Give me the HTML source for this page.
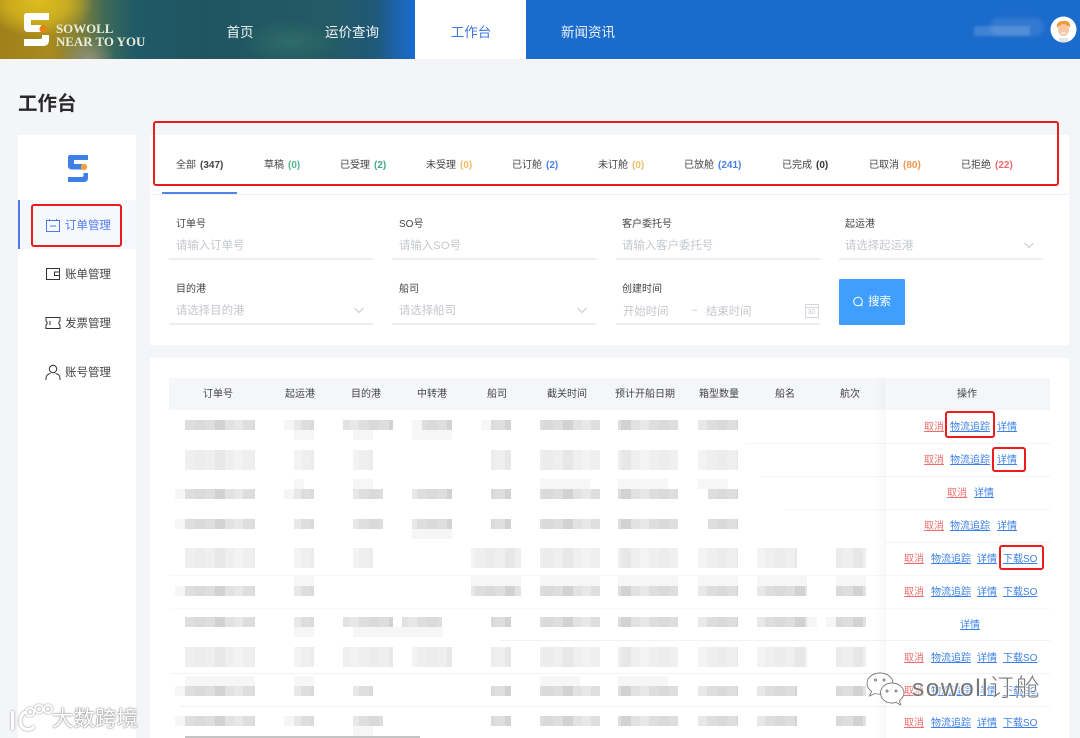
<!DOCTYPE html>
<html lang="zh"><head><meta charset="utf-8"><title>工作台</title>
<style>
html,body{margin:0;padding:0}
body{width:1080px;height:738px;overflow:hidden;position:relative;background:#f3f5f9;font-family:"Liberation Sans","Noto Sans CJK SC",sans-serif;color:#333}
.a,.a *{box-sizing:border-box}
.a{position:absolute;white-space:nowrap;line-height:1}
.hdr{left:0;top:0;width:1080px;height:59px;overflow:hidden;background:
radial-gradient(ellipse 55px 35px at 38px 2px,#dcbc1e 0,rgba(220,188,30,.7) 55%,rgba(220,188,30,0) 100%),
radial-gradient(ellipse 28px 22px at 88px 58px,#8f9078 0,rgba(143,144,120,0) 100%),
radial-gradient(ellipse 50px 22px at 290px 42px,#2e6c68 0,rgba(46,108,104,0) 100%),
linear-gradient(90deg,#a08019 0,#a88a1e 50px,#80803a 80px,#3f6a58 105px,#1f5a68 135px,#1f5560 200px,#245a64 330px,#1f5878 375px,#1b6bcc 412px,#1b6bcc 1080px)}
.nav{top:26px;font-size:13.5px;color:#eef3f8;width:80px;text-align:center;margin-left:-40px}
.tab{top:161px;font-size:10px;color:#444}
.tab b{font-weight:700;margin-left:4px}
.lb{font-size:10px;color:#444}
.ph{font-size:11.4px;color:#c4c7cc}
.ul{height:1.5px;background:#eceef1;width:204px}
.sd{left:65px;font-size:11.5px;color:#444}
.th{top:390px;font-size:10px;color:#444;width:70px;text-align:center;margin-left:-35px}
.c,.d{font-size:10px;text-decoration:underline;position:absolute;line-height:1}
.c{color:#ee6f6f}.d{color:#3c80e8}
.rb{border:2px solid #ea1c1c;border-radius:3px}
.ln{height:1px;background:#f0f2f5}
</style></head><body>

<div class="a hdr"></div>
<svg class="a" style="left:22px;top:11px" width="30" height="37" viewBox="0 0 30 37">
<path d="M5 2H27V9H9V14H19V21H6C3.500 21 2 19.500 2 17V5C2 3 3 2 5 2Z M2 28H18C19.500 28 20 27.500 20 26V24H27V29C27 33 25 35 21 35H2Z" fill="#fff"/>
<circle cx="21" cy="18" r="3.600" fill="#ea7f12"/></svg>
<div class="a" style="left:56px;top:22px;font:700 12.9px 'Liberation Serif',serif;color:#e9ecd8">SOWOLL</div>
<div class="a" style="left:56px;top:35px;font:700 12.9px 'Liberation Serif',serif;color:#e9ecd8">NEAR TO YOU</div>
<div class="a nav" style="left:240px">首页</div>
<div class="a nav" style="left:352px">运价查询</div>
<div class="a" style="left:415px;top:0;width:111px;height:59px;background:#fff"></div>
<div class="a nav" style="left:471px;color:#3f78e0">工作台</div>
<div class="a nav" style="left:588px">新闻资讯</div>
<div class="a" style="left:974px;top:26px;width:56px;height:10px;background:rgba(255,255,255,.16);filter:blur(1px)"></div>
<div class="a" style="left:990px;top:18px;width:54px;height:18px;border-radius:10px;background:rgba(255,255,255,.1);filter:blur(2px)"></div>
<svg class="a" style="left:1050px;top:16px" width="27" height="27" viewBox="0 0 27 27">
<circle cx="13.500" cy="13.500" r="13" fill="#fff"/>
<path d="M7 12C6 7 9 5 13 5C18 4 21 7 20 12L18.500 10H9Z" fill="#f09a3a"/>
<ellipse cx="13.500" cy="14" rx="5.500" ry="6" fill="#f7c7a4"/>
<path d="M10.500 16.500Q13.500 19.500 16.500 16.500Z" fill="#fff"/>
<path d="M9 26V22H18V26Z" fill="#e9e4e4"/></svg>

<div class="a" style="left:18px;top:95px;font-size:19.500px;font-weight:700;color:#2a2a2a">工作台</div>

<div class="a" style="left:18px;top:135px;width:118px;height:603px;background:#fff"></div>
<svg class="a" style="left:67px;top:154px" width="22" height="29" viewBox="0 0 22 29">
<path d="M3 1H21V6H7V10H15V15.500H5C2.500 15.500 1 14 1 12V3C1 2 2 1 3 1Z M1 23H15C16 23 16.500 22.500 16.500 21V19H21V24C21 26.500 19.500 28 17 28H1Z" fill="#3f7fe8"/>
<circle cx="17" cy="13" r="3.200" fill="#f5a23c"/></svg>
<div class="a" style="left:18px;top:200px;width:118px;height:49px;background:#f5f8ff;border-left:2px solid #4f7ae8"></div>
<svg class="a" style="left:45px;top:218px" width="16" height="15" viewBox="0 0 16 15" fill="none" stroke="#4f7ae8" stroke-width="1">
<path d="M1.500 2.500H14.500V13.500H1.500Z M4.500 1V3 M11.500 1V3 M5 8H11"/></svg>
<svg class="a" style="left:45px;top:267px" width="16" height="14" viewBox="0 0 16 14" fill="none" stroke="#333" stroke-width="1">
<path d="M1.500 1.500H14.500V12.500H1.500Z M14 5H9.500V8.500H14"/></svg>
<svg class="a" style="left:45px;top:316px" width="16" height="14" viewBox="0 0 16 14" fill="none" stroke="#333" stroke-width="1">
<path d="M1 1.500H15V5C13.500 5.500 13.500 8.500 15 9V12.500H1V9C2.500 8.500 2.500 5.500 1 5Z M5 5V9"/></svg>
<svg class="a" style="left:45px;top:364px" width="16" height="17" viewBox="0 0 16 17" fill="none" stroke="#333" stroke-width="1">
<circle cx="8" cy="5" r="3.700"/><path d="M1 16V14C1 11.500 3 10 5.500 9.500M15 16V14C15 11.500 13 10 10.500 9.500"/></svg>
<div class="a sd" style="top:221px;color:#4f7ae8">订单管理</div>
<div class="a sd" style="top:270px">账单管理</div>
<div class="a sd" style="top:319px">发票管理</div>
<div class="a sd" style="top:368px">账号管理</div>

<div class="a" style="left:150px;top:135px;width:919px;height:210px;background:#fff"></div>
<div class="a" style="left:150px;top:194px;width:919px;height:1px;background:#eff1f4"></div>
<div class="a" style="left:162px;top:192px;width:75px;height:2px;background:#4f86e8"></div>
<div class="a tab" style="left:176px">全部<b style="color:#444">(347)</b></div>
<div class="a tab" style="left:264px">草稿<b style="color:#4fb58c">(0)</b></div>
<div class="a tab" style="left:340px">已受理<b style="color:#3fae84">(2)</b></div>
<div class="a tab" style="left:426px">未受理<b style="color:#eebd62">(0)</b></div>
<div class="a tab" style="left:512px">已订舱<b style="color:#4a7fe6">(2)</b></div>
<div class="a tab" style="left:598px">未订舱<b style="color:#eebd62">(0)</b></div>
<div class="a tab" style="left:684px">已放舱<b style="color:#4a7fe6">(241)</b></div>
<div class="a tab" style="left:782px">已完成<b style="color:#333">(0)</b></div>
<div class="a tab" style="left:869px">已取消<b style="color:#ee9650">(80)</b></div>
<div class="a tab" style="left:961px">已拒绝<b style="color:#ee6a72">(22)</b></div>

<div class="a lb" style="left:176px;top:220px">订单号</div>
<div class="a lb" style="left:399px;top:220px">SO号</div>
<div class="a lb" style="left:622px;top:220px">客户委托号</div>
<div class="a lb" style="left:845px;top:220px">起运港</div>
<div class="a ph" style="left:176px;top:241px">请输入订单号</div>
<div class="a ph" style="left:399px;top:241px">请输入SO号</div>
<div class="a ph" style="left:622px;top:241px">请输入客户委托号</div>
<div class="a ph" style="left:845px;top:241px">请选择起运港</div>
<div class="a ul" style="left:169px;top:258px"></div>
<div class="a ul" style="left:392px;top:258px"></div>
<div class="a ul" style="left:616px;top:258px"></div>
<div class="a ul" style="left:839px;top:258px"></div>
<div class="a lb" style="left:176px;top:285px">目的港</div>
<div class="a lb" style="left:399px;top:285px">船司</div>
<div class="a lb" style="left:622px;top:285px">创建时间</div>
<div class="a ph" style="left:176px;top:306px">请选择目的港</div>
<div class="a ph" style="left:399px;top:306px">请选择船司</div>
<div class="a ph" style="left:623px;top:307px">开始时间</div>
<div class="a ph" style="left:691px;top:306px">~</div>
<div class="a ph" style="left:706px;top:307px">结束时间</div>
<div class="a ul" style="left:169px;top:323px"></div>
<div class="a ul" style="left:392px;top:323px"></div>
<div class="a ul" style="left:616px;top:323px"></div>
<svg class="a" style="left:0;top:0" width="1080" height="340" viewBox="0 0 1080 340" fill="none" stroke="#c5c8cd" stroke-width="1">
<path d="M1024.500 243L1029 247.500L1033.500 243M354.500 308L359 312.500L363.500 308M577.500 308L582 312.500L586.500 308"/>
<path d="M805.500 304.500H818.500V317.500H805.500ZM805.500 307.500H818.500" stroke="#d5d7da"/></svg>
<div class="a" style="left:807.500px;top:309px;font-size:7px;font-family:'Liberation Sans',sans-serif;color:#c9cbd0">30</div>
<div class="a" style="left:839px;top:279px;width:66px;height:46px;background:#409eff;border-radius:1px"></div>
<svg class="a" style="left:852px;top:296px" width="12" height="12" viewBox="0 0 12 12" fill="none" stroke="#fff" stroke-width="1"><circle cx="6" cy="5.500" r="4.300"/><path d="M9 8.500L10.500 10"/></svg>
<div class="a" style="left:868px;top:297px;font-size:11.500px;color:#fff">搜索</div>

<div class="a" style="left:150px;top:358px;width:919px;height:380px;background:#fff"></div>
<div class="a" style="left:169px;top:378px;width:881px;height:32px;background:#f5f6fa"></div>
<div class="a th" style="left:218px">订单号</div>
<div class="a th" style="left:300px">起运港</div>
<div class="a th" style="left:366px">目的港</div>
<div class="a th" style="left:432px">中转港</div>
<div class="a th" style="left:497px">船司</div>
<div class="a th" style="left:567px">截关时间</div>
<div class="a th" style="left:645px">预计开船日期</div>
<div class="a th" style="left:719px">箱型数量</div>
<div class="a th" style="left:785px">船名</div>
<div class="a th" style="left:850px">航次</div>
<div class="a th" style="left:967px">操作</div>

<div class="a ln" style="left:885px;top:443px;width:165px"></div><div class="a ln" style="left:745px;top:443px;width:140px;opacity:.6"></div>
<div class="a ln" style="left:885px;top:476px;width:165px"></div><div class="a ln" style="left:760px;top:476px;width:125px;opacity:.6"></div>
<div class="a ln" style="left:885px;top:509px;width:165px"></div><div class="a ln" style="left:785px;top:509px;width:100px;opacity:.6"></div>
<div class="a ln" style="left:885px;top:542px;width:165px"></div>
<div class="a ln" style="left:170px;top:575px;width:880px;opacity:.5"></div>
<div class="a ln" style="left:170px;top:608px;width:880px;opacity:.4"></div>
<div class="a ln" style="left:500px;top:640px;width:550px"></div>
<div class="a ln" style="left:170px;top:673px;width:880px"></div>
<div class="a ln" style="left:180px;top:706px;width:870px"></div>

<svg class="a" style="left:0;top:0" width="1080" height="738" viewBox="0 0 1080 738">
<defs>
<pattern id="s" patternUnits="userSpaceOnUse" x="185" y="0" width="58" height="10"><rect width="58" height="10" fill="#dedede"/><rect x="10" width="10" height="10" fill="#dadada"/><rect x="30" width="10" height="10" fill="#d2d2d2"/><rect x="40" width="9" height="10" fill="#e2e2e2"/><rect x="49" width="9" height="10" fill="#e8e8e8"/></pattern>
<pattern id="l" patternUnits="userSpaceOnUse" x="185" y="0" width="58" height="20"><rect width="58" height="20" fill="#efefef"/><rect x="10" width="10" height="20" fill="#ececec"/><rect x="30" width="10" height="20" fill="#e7e7e7"/><rect x="49" width="9" height="20" fill="#f3f3f3"/></pattern>
<linearGradient id="fx" x1="0" x2="1"><stop offset="0" stop-color="#000" stop-opacity="0"/><stop offset="1" stop-color="#000" stop-opacity=".025"/></linearGradient>
</defs>
<g fill="url(#s)">
<path d="M185 420h70v10h-70zM294 420h20v10h-20zM343 420h50v10h-50zM422 420h30v10h-30zM491 420h20v10h-20zM540 420h60v10h-60zM618 420h60v10h-60zM698 420h40v10h-40z"/>
<path d="M185 489h70v10h-70zM294 489h20v10h-20zM353 489h30v10h-30zM412 489h40v10h-40zM491 489h20v10h-20zM540 489h60v10h-60zM618 489h60v10h-60zM708 489h30v10h-30z"/>
<path d="M185 519h70v10h-70zM294 519h20v10h-20zM353 519h30v10h-30zM412 519h40v10h-40zM491 519h20v10h-20zM540 519h60v10h-60zM618 519h60v10h-60zM708 519h30v10h-30z"/>
<path d="M185 586h70v10h-70zM294 586h20v10h-20zM471 586h50v10h-50zM540 586h60v10h-60zM618 586h60v10h-60zM698 586h40v10h-40zM757 586h50v10h-50zM836 586h30v10h-30z"/>
<path d="M185 617h70v10h-70zM294 617h20v10h-20zM343 617h50v10h-50zM402 617h40v10h-40zM491 617h20v10h-20zM540 617h60v10h-60zM618 617h60v10h-60zM698 617h40v10h-40zM757 617h50v10h-50zM836 617h30v10h-30z"/>
<path d="M185 686h70v10h-70zM294 686h20v10h-20zM353 686h20v10h-20zM491 686h20v10h-20zM540 686h60v10h-60zM618 686h60v10h-60zM698 686h40v10h-40zM757 686h40v10h-40zM836 686h30v10h-30z"/>
<path d="M185 716h70v10h-70zM294 716h20v10h-20zM353 716h30v10h-30zM491 716h20v10h-20zM540 716h60v10h-60zM618 716h60v10h-60zM698 716h40v10h-40zM757 716h40v10h-40zM836 716h30v10h-30z"/>
</g>
<g fill="url(#l)">
<path d="M185 450h70v20h-70zM294 450h20v20h-20zM353 450h20v20h-20zM491 450h20v20h-20zM540 450h60v20h-60zM618 450h60v20h-60zM698 450h40v20h-40z"/>
<path d="M185 548h70v20h-70zM294 548h20v20h-20zM353 548h20v20h-20zM471 548h50v20h-50zM540 548h60v20h-60zM618 548h60v20h-60zM698 548h40v20h-40zM757 548h40v20h-40zM836 548h30v20h-30z"/>
<path d="M185 647h70v20h-70zM294 647h20v20h-20zM343 647h50v20h-50zM412 647h40v20h-40zM491 647h20v20h-20zM540 647h60v20h-60zM618 647h60v20h-60zM698 647h40v20h-40zM757 647h50v20h-50zM836 647h30v20h-30z"/>
</g>
<g fill="#f6f6f6">
<path d="M294 430h20v10h-20zM353 430h20v10h-20zM412 430h40v10h-40zM284 420h10v10h-10zM412 420h10v10h-10zM481 420h10v10h-10z"/>
<path d="M294 479h10v10h-10zM353 479h20v10h-20zM540 479h50v10h-50zM618 479h50v10h-50zM698 479h30v10h-30z"/>
<path d="M175 489h10v10h-10zM284 489h10v10h-10zM412 529h40v10h-40zM175 519h10v10h-10z"/>
<path d="M294 576h20v10h-20zM471 576h50v10h-50zM540 576h60v10h-60zM618 576h60v10h-60zM698 576h40v10h-40zM757 576h50v10h-50zM836 576h30v10h-30zM175 586h10v10h-10z"/>
<path d="M353 627h90v10h-90zM294 627h20v10h-20zM185 676h70v10h-70zM294 676h20v10h-20zM540 676h40v10h-40zM618 676h50v10h-50z"/>
<path d="M175 686h10v10h-10zM175 716h10v10h-10zM284 716h10v10h-10zM353 726h20v10h-20zM826 617h10v10h-10zM807 617h10v10h-10z"/>
</g>
<rect x="185" y="736" width="235" height="2" fill="#c4c4c4"/>
<rect x="874" y="378" width="11" height="360" fill="url(#fx)"/>
</svg>
<div class="a" style="left:885px;top:410px;width:1px;height:328px;background:#f6f7f9"></div>

<a class="c" style="left:924px;top:423px">取消</a><a class="d" style="left:950px;top:423px">物流追踪</a><a class="d" style="left:997px;top:423px">详情</a>
<a class="c" style="left:924px;top:456px">取消</a><a class="d" style="left:950px;top:456px">物流追踪</a><a class="d" style="left:997px;top:456px">详情</a>
<a class="c" style="left:947px;top:489px">取消</a><a class="d" style="left:974px;top:489px">详情</a>
<a class="c" style="left:924px;top:522px">取消</a><a class="d" style="left:950px;top:522px">物流追踪</a><a class="d" style="left:997px;top:522px">详情</a>
<a class="c" style="left:904px;top:555px">取消</a><a class="d" style="left:931px;top:555px">物流追踪</a><a class="d" style="left:977px;top:555px">详情</a><a class="d" style="left:1003px;top:555px">下载SO</a>
<a class="c" style="left:904px;top:588px">取消</a><a class="d" style="left:931px;top:588px">物流追踪</a><a class="d" style="left:977px;top:588px">详情</a><a class="d" style="left:1003px;top:588px">下载SO</a>
<a class="d" style="left:960px;top:621px">详情</a>
<a class="c" style="left:904px;top:654px">取消</a><a class="d" style="left:931px;top:654px">物流追踪</a><a class="d" style="left:977px;top:654px">详情</a><a class="d" style="left:1003px;top:654px">下载SO</a>
<a class="c" style="left:904px;top:687px">取消</a><a class="d" style="left:931px;top:687px">物流追踪</a><a class="d" style="left:977px;top:687px">详情</a><a class="d" style="left:1003px;top:687px">下载SO</a>
<a class="c" style="left:904px;top:719px">取消</a><a class="d" style="left:931px;top:719px">物流追踪</a><a class="d" style="left:977px;top:719px">详情</a><a class="d" style="left:1003px;top:719px">下载SO</a>

<div class="a rb" style="left:153px;top:121px;width:906px;height:65px"></div>
<div class="a rb" style="left:31px;top:204px;width:91px;height:43px"></div>
<div class="a rb" style="left:945px;top:411px;width:50px;height:27px"></div>
<div class="a rb" style="left:992px;top:447px;width:34px;height:25px"></div>
<div class="a rb" style="left:999px;top:545px;width:45px;height:25px"></div>

<svg class="a" style="left:865px;top:670px" width="42" height="40" viewBox="0 0 42 40" fill="rgba(255,255,255,.85)" stroke="#777" stroke-width=".9">
<path d="M15 3C7.500 3 2 7.500 2 13.500C2 17 4 19.500 6.500 21.500L4.500 26L10 23.500C11.500 24 13 24.200 15 24.200C23 24.200 28 19 28 13.500C28 7.500 22.500 3 15 3Z"/>
<path d="M27 13C20.500 13 15.500 17.500 15.500 23C15.500 28.500 20.500 33 27 33C28.500 33 30 32.800 31 32.300L35.500 35L34.500 30.500C37 28.500 39 26 39 23C39 17.500 33.500 13 27 13Z"/>
<circle cx="10.500" cy="10" r="1"/><circle cx="19" cy="10" r="1"/><circle cx="22" cy="21" r="1"/><circle cx="31" cy="21" r="1"/></svg>
<div class="a" style="left:912px;top:677px;font-size:24.500px;font-weight:300;color:#777;letter-spacing:1.5px;text-shadow:0 0 2px #fff,0 0 2px #fff,1px 1px 1px #fff">sowoll订舱</div>

<svg class="a" style="left:9px;top:702px;filter:drop-shadow(0 0 1px #8a8a8a)" width="46" height="32" viewBox="0 0 46 32" fill="none" stroke="#fff">
<path d="M3.500 9V28" stroke-width="3"/><path d="M17 10C10 12 9 24 16 27C20 28.500 24 26.500 25 24" stroke-width="3"/>
<circle cx="21" cy="10" r="4" stroke-width="1.800"/><circle cx="30" cy="7" r="4" stroke-width="1.800"/><circle cx="39" cy="7" r="4" stroke-width="1.800"/></svg>
<div class="a" style="left:52px;top:709px;font-size:21.500px;color:#fff;text-shadow:0 0 1px #777,0 0 2px #888">大数跨境</div>
</body></html>
